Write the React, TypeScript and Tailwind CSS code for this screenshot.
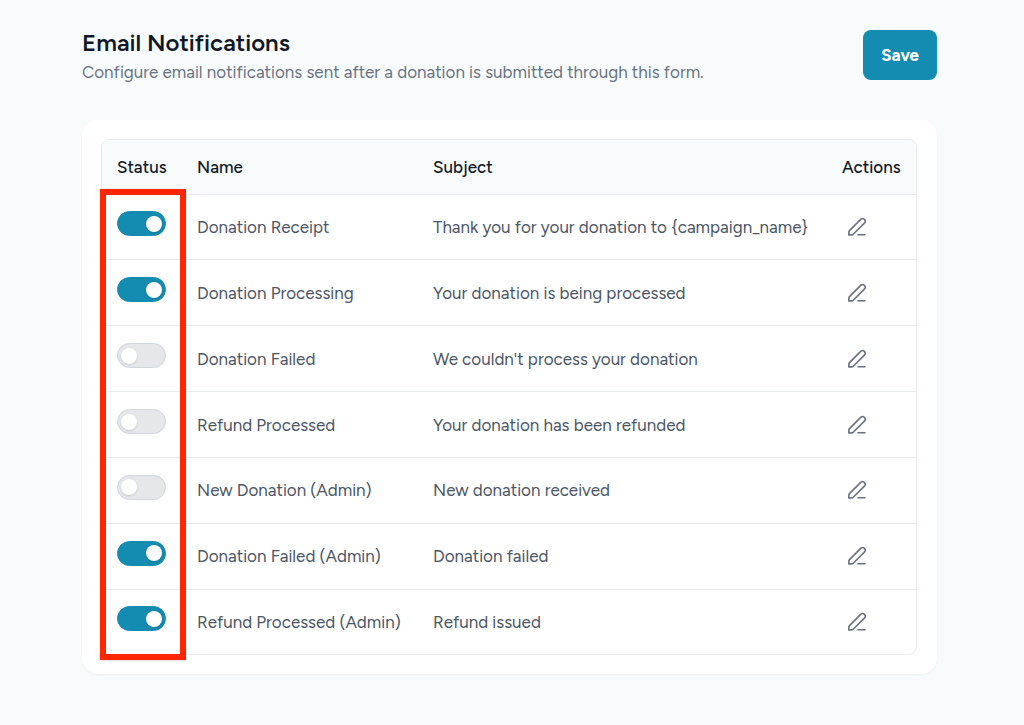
import React, { useState } from "react"

const initialEmails = [
  { id: 1, name: "Donation Receipt", subject: "Thank you for your donation to {campaign_name}", enabled: true },
  { id: 2, name: "Donation Processing", subject: "Your donation is being processed", enabled: true },
  { id: 3, name: "Donation Failed", subject: "We couldn't process your donation", enabled: false },
  { id: 4, name: "Refund Processed", subject: "Your donation has been refunded", enabled: false },
  { id: 5, name: "New Donation (Admin)", subject: "New donation received", enabled: false },
  { id: 6, name: "Donation Failed (Admin)", subject: "Donation failed", enabled: true },
  { id: 7, name: "Refund Processed (Admin)", subject: "Refund issued", enabled: true },
]

function PencilIcon() {
  return (
    <svg
      viewBox="0 0 20 20"
      className="size-5"
      fill="none"
      stroke="currentColor"
      strokeWidth="1.6"
      strokeLinecap="round"
      strokeLinejoin="round"
      aria-hidden="true"
    >
      <path d="M1.8 18l.1-3.100c0-.5.3-1 .6-1.300L13.700 2.400a2.600 2.600 0 0 1 3.700 3.700L6.200 17.300c-.3.300-.8.600-1.300.6z" />
      <path d="M11 17.800h7" />
    </svg>
  )
}

export default function EmailNotifications() {
  const [emails, setEmails] = useState(initialEmails)

  const toggle = (id: number) => {
    setEmails(emails.map((e) => (e.id === id ? { ...e, enabled: !e.enabled } : e)))
  }

  return (
    <div className="min-h-screen bg-[#f7fbfc] pt-[30px] pr-[87px] pb-12 pl-[82px] font-['Figtree','Lato',sans-serif] text-[17px] leading-6 text-gray-600">
      {/* Header */}
      <header className="flex items-start justify-between">
        <div>
          <h1 className="text-2xl leading-[26px] font-semibold text-gray-900">Email Notifications</h1>
          <p className="mt-1 text-gray-500">
            Configure email notifications sent after a donation is submitted through this form.
          </p>
        </div>
        <button
          type="button"
          className="rounded-lg bg-[#148bb1] px-[18px] py-[13px] font-bold text-white hover:bg-[#117999]"
        >
          Save
        </button>
      </header>

      {/* Email list */}
      <main className="mt-9 rounded-2xl bg-white py-[19px] pr-5 pl-[19px] shadow-xs">
        <div className="relative rounded-lg border border-[#e9ebee]">
          <table className="h-[514px] w-full table-fixed text-left">
            <thead>
              <tr className="h-[54px] text-gray-900">
                <th className="w-20 rounded-tl-lg bg-[#f7fbfc] pl-[15px] font-medium">Status</th>
                <th className="w-[236px] bg-[#f7fbfc] pl-[15px] font-medium">Name</th>
                <th className="bg-[#f7fbfc] pl-[15px] font-medium">Subject</th>
                <th className="w-[89px] rounded-tr-lg bg-[#f7fbfc] pl-[15px] font-medium">Actions</th>
              </tr>
            </thead>
            <tbody>
              {emails.map((email) => (
                <tr key={email.id} className="border-t border-[#e9ebee]">
                  <td className="pb-[6px] pl-[15px]">
                    <input
                      type="checkbox"
                      role="switch"
                      aria-label={email.name}
                      checked={email.enabled}
                      onChange={() => toggle(email.id)}
                      className="flex h-[25px] w-[49px] cursor-pointer appearance-none items-center rounded-full border border-gray-300 bg-gray-200 px-[3px] before:size-4 before:rounded-full before:bg-white before:shadow-sm checked:justify-end checked:border-[#148bb1] checked:bg-[#148bb1]"
                    />
                  </td>
                  <td className="pl-[15px]">{email.name}</td>
                  <td className="pl-[15px]">{email.subject}</td>
                  <td className="pl-5">
                    <button type="button" aria-label={`Edit ${email.name}`} className="block cursor-pointer text-gray-500">
                      <PencilIcon />
                    </button>
                  </td>
                </tr>
              ))}
            </tbody>
          </table>

          {/* Highlight over the status column */}
          <div className="pointer-events-none absolute top-[49px] -bottom-[6px] -left-[2px] w-[86px] border-[6px] border-[#ff2600] shadow-sm" />
        </div>
      </main>
    </div>
  )
}
